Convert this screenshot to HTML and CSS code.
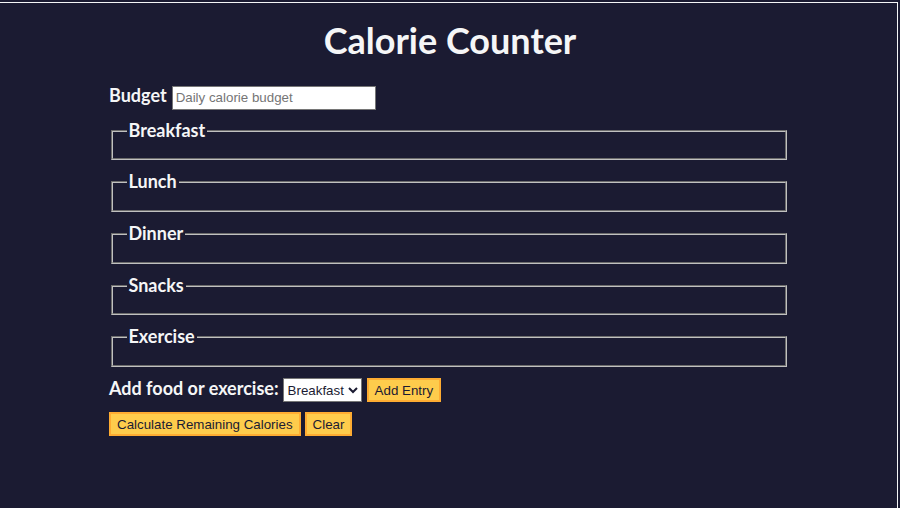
FILE: index.html
```html
<!DOCTYPE html>
<html lang="en">
<head>
<meta charset="utf-8">
<title>Calorie Counter</title>
<link rel="stylesheet" href="styles.css">
</head>
<body>
<div class="frame-lines"></div>
<main>
  <h1 class="title">Calorie Counter</h1>
  <div class="container">
    <form id="calorie-counter" class="form">
      <div class="budget-row">
        <label class="lbl" for="budget">Budget</label>
        <input class="field budget" type="number" min="0" id="budget" placeholder="Daily calorie budget">
      </div>
      <fieldset class="meal">
        <legend class="legend">Breakfast</legend>
        <div class="input-container"></div>
      </fieldset>
      <fieldset class="meal">
        <legend class="legend">Lunch</legend>
        <div class="input-container"></div>
      </fieldset>
      <fieldset class="meal">
        <legend class="legend">Dinner</legend>
        <div class="input-container"></div>
      </fieldset>
      <fieldset class="meal">
        <legend class="legend">Snacks</legend>
        <div class="input-container"></div>
      </fieldset>
      <fieldset class="meal">
        <legend class="legend">Exercise</legend>
        <div class="input-container"></div>
      </fieldset>
      <div class="controls">
        <label class="lbl" for="entry-dropdown">Add food or exercise:</label>
        <select class="field select" id="entry-dropdown" name="options">
          <option value="breakfast" selected>Breakfast</option>
          <option value="lunch">Lunch</option>
          <option value="dinner">Dinner</option>
          <option value="snacks">Snacks</option>
          <option value="exercise">Exercise</option>
        </select>
        <button class="btn add" type="button" id="add-entry">Add Entry</button>
      </div>
      <div class="actions">
        <button class="btn" type="button">Calculate Remaining Calories</button>
        <button class="btn" type="button" id="clear">Clear</button>
      </div>
    </form>
  </div>
</main>
</body>
</html>
```

FILE: styles.css
```css
:root {
  --light-grey: #f5f6f7;
  --dark-blue: #1b1b32;
  --light-yellow: #fecc4c;
  --golden-yellow: #feac32;
}

html {
  background-color: var(--dark-blue);
}

body {
  margin: 0;
  padding: 0;
  background-color: var(--dark-blue);
  color: var(--light-grey);
  font-family: "Lato", sans-serif;
  font-size: 18px;
}

.frame-lines {
  position: fixed;
  left: 0;
  top: 2px;
  width: 897px;
  height: 520px;
  border-top: 1px solid var(--light-grey);
  border-right: 1px solid var(--light-grey);
  pointer-events: none;
}

main {
  padding-top: 18px;
}

.title {
  text-align: center;
  font-family: "Lato", sans-serif;
  font-size: 36px;
  line-height: 44px;
  margin: 0;
}

.container {
  width: 680px;
  margin: 0 0 0 109px;
}

.lbl, .legend {
  font-weight: bold;
  font-size: 18px;
}

.field, .btn {
  box-sizing: border-box;
  height: 24px;
  color: var(--dark-blue);
  font-family: "Liberation Sans", Arial, sans-serif;
  font-size: 13.333px;
}

.budget-row {
  display: flex;
  align-items: baseline;
  gap: 5px;
  margin-top: 22px;
  margin-bottom: 9px;
}

.budget {
  width: 204px;
  padding: 1px 3px;
  border: 1px solid #767676;
  background: #fff;
}

.budget::placeholder {
  color: #757575;
}

.meal {
  margin: 0 2px 10px;
  padding: 6.5px 13.5px 9.2px;
  border: 2px groove #c0c0c0;
}

.legend {
  padding: 0 2px 2px;
}

.input-container {
  display: flex;
  flex-direction: column;
}

.controls {
  display: flex;
  align-items: baseline;
  gap: 4px;
}

.select {
  width: 79px;
  margin: 0;
  background: #fff;
  border: 1px solid #767676;
  border-radius: 0;
}

.add {
  margin-left: 1px;
  padding: 1px 7px;
}

.actions {
  display: flex;
  gap: 4px;
  margin-top: 10px;
}

.btn {
  cursor: pointer;
  background-color: var(--light-yellow);
  border: 2px solid var(--golden-yellow);
  padding: 1px 6px;
}
```
